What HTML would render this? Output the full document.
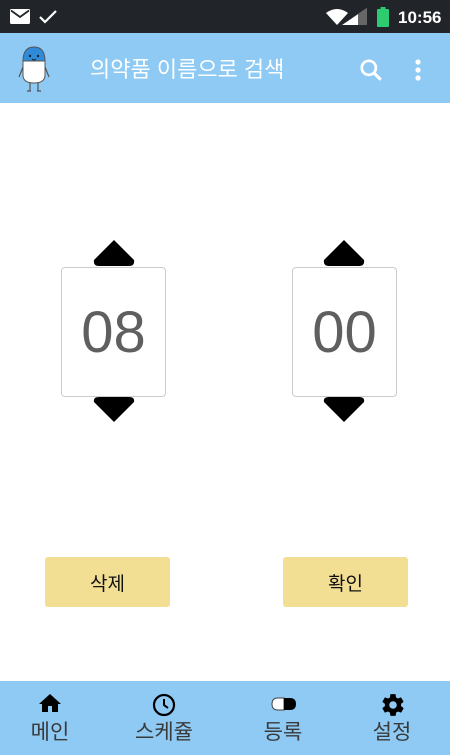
<!DOCTYPE html>
<html><head><meta charset="utf-8"><style>
*{margin:0;padding:0;box-sizing:border-box}
body{width:450px;height:755px;overflow:hidden;background:#fff;font-family:"Liberation Sans","Noto Sans CJK KR",sans-serif;position:relative}
.abs{position:absolute}
.sb{left:0;top:0;width:450px;height:33px;background:#212529}
.ab{left:0;top:33px;width:450px;height:70px;background:#8ecaf4}
.box{width:105px;height:130px;border:1px solid #ccc;border-radius:4px;top:267px;font-size:58px;color:#5f5f5f;display:flex;align-items:center;justify-content:center}
.btn{top:557px;width:125px;height:50px;background:#f3df94;border-radius:3px;display:flex;align-items:center;justify-content:center;font-size:19px;color:#111}
.nav{left:0;top:681px;width:450px;height:74px;background:#8ecaf4}
.tab{top:716px;width:112px;text-align:center;font-size:21px;color:#3a3a3a}
</style></head><body>
<div class="abs sb"></div>
<svg class="abs" style="left:10px;top:9px" width="20" height="15" viewBox="0 0 20 15"><rect width="20" height="15" rx="1.5" fill="#fff"/><path d="M1 1.5L10 8L19 1.5" stroke="#212529" stroke-width="1.8" fill="none"/></svg>
<svg class="abs" style="left:38px;top:9px" width="20" height="15" viewBox="0 0 20 15"><path d="M2 8L7 13L18 2" stroke="#fff" stroke-width="2.2" fill="none"/></svg>
<svg class="abs" style="left:326px;top:8px" width="42" height="18" viewBox="0 0 42 18"><path d="M0 5Q11 -3 22 5L11 17Z" fill="#fff"/><path d="M16 17L41 0V17Z" fill="#fff"/><path d="M32 6V17H41V0Z" fill="#666"/></svg>
<svg class="abs" style="left:377px;top:7px" width="12" height="20" viewBox="0 0 12 20"><rect x="3.5" y="0" width="5" height="2" fill="#2ecc71"/><rect x="0" y="2" width="12" height="18" rx="1" fill="#2ecc71"/></svg>
<div class="abs" style="left:398px;top:8px;color:#fff;font-size:17px;font-weight:bold">10:56</div>
<div class="abs ab"></div>
<svg class="abs" style="left:17px;top:45px" width="34" height="48" viewBox="0 0 34 48">
<path d="M6 16Q6 2 17 2Q28 2 28 16Z" fill="#2f8ad8"/><path d="M6 16H28V30Q28 38 17 38Q6 38 6 30Z" fill="#fff" stroke="#555" stroke-width="1"/><path d="M6 16Q6 2 17 2Q28 2 28 16" fill="none" stroke="#555" stroke-width="1"/>
<circle cx="13" cy="11" r="1.2" fill="#222"/><circle cx="21" cy="11" r="1.2" fill="#222"/><path d="M15 14Q17 16 19 14" stroke="#222" fill="none"/>
<path d="M6 22L2 32M28 22L32 32M13 38V46M21 38V46M10 46H14M20 46H24" stroke="#555" stroke-width="1.2" fill="none"/></svg>
<div class="abs" style="left:90px;top:52px;color:#fff;font-size:22px">의약품 이름으로 검색</div>
<svg class="abs" style="left:358px;top:57px" width="26" height="26" viewBox="0 0 24 24"><circle cx="10" cy="10" r="6.5" stroke="#fff" stroke-width="2.5" fill="none"/><path d="M15 15L21 21" stroke="#fff" stroke-width="2.8"/></svg>
<svg class="abs" style="left:412px;top:57px" width="12" height="26" viewBox="0 0 12 26"><circle cx="6" cy="5" r="2.6" fill="#fff"/><circle cx="6" cy="13" r="2.6" fill="#fff"/><circle cx="6" cy="21" r="2.6" fill="#fff"/></svg>

<svg class="abs" style="left:93px;top:239px" width="42" height="28" viewBox="0 0 42 28"><path d="M21 1L41 21Q42 27 36 27H6Q0 27 1 21Z" fill="#000"/></svg>
<svg class="abs" style="left:93px;top:397px" width="42" height="26" viewBox="0 0 42 26"><path d="M21 25L41 5Q42 0 36 0H6Q0 0 1 5Z" fill="#000"/></svg>
<div class="abs box" style="left:61px">08</div>
<svg class="abs" style="left:323px;top:239px" width="42" height="28" viewBox="0 0 42 28"><path d="M21 1L41 21Q42 27 36 27H6Q0 27 1 21Z" fill="#000"/></svg>
<svg class="abs" style="left:323px;top:397px" width="42" height="26" viewBox="0 0 42 26"><path d="M21 25L41 5Q42 0 36 0H6Q0 0 1 5Z" fill="#000"/></svg>
<div class="abs box" style="left:292px">00</div>

<div class="abs btn" style="left:45px">삭제</div>
<div class="abs btn" style="left:283px">확인</div>

<div class="abs nav"></div>
<svg class="abs" style="left:38px;top:693px" width="24" height="20" viewBox="0 0 24 20"><path d="M12 1L1 11H4V19H10V13H14V19H20V11H23Z" fill="#000"/></svg>
<svg class="abs" style="left:152px;top:693px" width="24" height="24" viewBox="0 0 24 24"><circle cx="12" cy="12" r="10" stroke="#000" stroke-width="2.2" fill="none"/><path d="M12 6V12L16 15" stroke="#000" stroke-width="2" fill="none"/></svg>
<svg class="abs" style="left:271px;top:697px" width="26" height="14" viewBox="0 0 26 14"><path d="M13 1H7Q1 1 1 7Q1 13 7 13H13Z" fill="#fff" stroke="#444" stroke-width="1"/><path d="M13 1H19Q25 1 25 7Q25 13 19 13H13Z" fill="#000"/></svg>
<svg class="abs" style="left:380px;top:692px" width="26" height="26" viewBox="0 0 24 24"><path fill="#000" d="M19.4 13c.04-.33.06-.66.06-1s-.02-.67-.07-1l2.1-1.65c.2-.15.24-.42.12-.64l-2-3.460c-.12-.22-.39-.3-.61-.22l-2.49 1c-.52-.4-1.08-.73-1.690-.98l-.38-2.65A.49.49 0 0 0 14 2h-4c-.25 0-.46.18-.49.42l-.38 2.65c-.61.25-1.17.59-1.69.98l-2.49-1c-.23-.09-.49 0-.61.22l-2 3.46c-.13.22-.07.49.12.64L4.57 11c-.04.33-.07.67-.07 1s.02.67.07 1l-2.11 1.65c-.19.15-.24.42-.12.64l2 3.46c.12.22.39.3.61.22l2.49-1c.52.4 1.08.73 1.69.98l.38 2.65c.03.24.24.42.49.42h4c.25 0 .46-.18.49-.42l.38-2.65c.61-.25 1.17-.59 1.69-.98l2.49 1c.23.09.49 0 .61-.22l2-3.46c.12-.22.07-.49-.12-.64L19.4 13zM12 15.5a3.5 3.5 0 1 1 0-7 3.5 3.5 0 0 1 0 7z"/></svg>
<div class="abs tab" style="left:-6px">메인</div>
<div class="abs tab" style="left:108px">스케쥴</div>
<div class="abs tab" style="left:227px">등록</div>
<div class="abs tab" style="left:336px">설정</div>
</body></html>
